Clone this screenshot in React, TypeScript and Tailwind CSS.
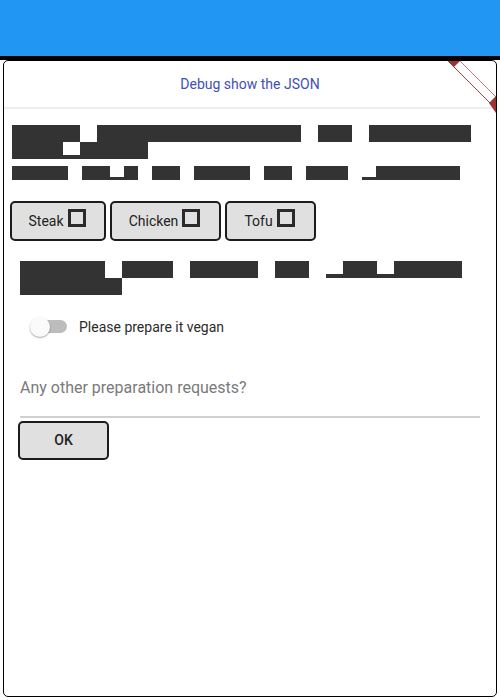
import React from "react";

const DARK = "bg-[#333333]";

// A redacted word
function Bar({ w, h }: { w: number; h: number }) {
  return <div className={DARK} style={{ width: w, height: h }} />;
}

// Redacted char with only its lower edge dark (white notch above)
function Notched({ w, h, dark }: { w: number; h: number; dark: number }) {
  return (
    <div className="flex flex-col" style={{ width: w, height: h }}>
      <div className="flex-1 bg-white" />
      <div className={DARK} style={{ height: dark }} />
    </div>
  );
}

function ChoiceButton({ label, width }: { label: string; width: number }) {
  return (
    <button
      className="flex h-[40px] items-center justify-center gap-[4px] rounded-[5px] border-2 border-[#1c1c1c] bg-[#e0e0e0] pr-[2px] text-[14px] text-[#222]"
      style={{ width }}
    >
      <span>{label}</span>
      <span className="mb-[6px] block size-[18px] border-[3px] border-[#2a2a2a] bg-[#e0e0e0]" />
    </button>
  );
}

function Switch() {
  return (
    <div className="relative h-[20px] w-[37px]">
      <div className="absolute left-[1px] top-[3px] h-[13px] w-[36px] rounded-full bg-[#bdbdbd]" />
      <div className="absolute left-0 top-0 size-[20px] rounded-full bg-[#fafafa] shadow-[0_1px_2px_rgba(0,0,0,0.35)]" />
    </div>
  );
}

export default function App() {
  return (
    <div className="h-[700px] w-[500px] bg-white font-['Roboto',sans-serif]">
      <div className="h-[56px] bg-[#2196f3]" />
      <div className="h-[4px] bg-black" />
      <div className="relative mx-[3px] h-[637px] overflow-hidden rounded-[5px] border border-black bg-white">
        {/* debug corner ribbon */}
        <svg
          className="absolute right-0 top-0"
          width="50"
          height="52"
          viewBox="0 0 50 52"
        >
          <line x1="2" y1="0" x2="52" y2="50" stroke="#b23a3a" strokeWidth="1" />
          <line x1="14" y1="0" x2="52" y2="38" stroke="#c05050" strokeWidth="0.8" />
          <polygon points="2,0 14,0 8,6" fill="#9e3232" />
          <polygon points="43,42 50,35 50,52" fill="#9e3232" />
        </svg>

        <div className="flex h-[46px] items-center justify-center text-[14px] text-[#3f51b5]">
          Debug show the JSON
        </div>
        <div className="h-[2px] bg-[#eeeeee]" />

        <div className="flex flex-col px-[8px]">
          {/* paragraph 1 */}
          <div className="mt-[16px] flex gap-[17px]">
            <Bar w={68} h={17} />
            <Bar w={204} h={17} />
            <Bar w={34} h={17} />
            <Bar w={102} h={17} />
          </div>
          <div className="flex">
            <Bar w={51} h={17} />
            <Notched w={17} h={17} dark={4} />
            <Bar w={68} h={17} />
          </div>

          {/* paragraph 2 */}
          <div className="mt-[7px] flex gap-[14px]">
            <Bar w={56} h={14} />
            <div className="flex">
              <Bar w={28} h={14} />
              <Notched w={14} h={14} dark={3} />
              <Bar w={14} h={14} />
            </div>
            <Bar w={28} h={14} />
            <Bar w={56} h={14} />
            <Bar w={28} h={14} />
            <Bar w={42} h={14} />
            <div className="flex">
              <Notched w={14} h={14} dark={3} />
              <Bar w={84} h={14} />
            </div>
          </div>

          {/* choices */}
          <div className="ml-[-2px] mt-[21px] flex gap-[4px]">
            <ChoiceButton label="Steak" width={96} />
            <ChoiceButton label="Chicken" width={111} />
            <ChoiceButton label="Tofu" width={91} />
          </div>

          <div className="ml-[8px] flex flex-col">
            {/* paragraph 3 */}
            <div className="mt-[20px] flex">
              <Bar w={85} h={17} />
              <div className="w-[17px]" />
              <Bar w={51} h={17} />
              <div className="w-[17px]" />
              <Bar w={68} h={17} />
              <div className="w-[17px]" />
              <Bar w={34} h={17} />
              <div className="w-[17px]" />
              <Notched w={17} h={17} dark={4} />
              <Bar w={34} h={17} />
              <Notched w={17} h={17} dark={4} />
              <Bar w={68} h={17} />
            </div>
            <Bar w={102} h={17} />

            {/* vegan switch */}
            <div className="mt-[12px] flex h-[40px] items-center gap-[12px] pl-[10px]">
              <Switch />
              <span className="text-[14px] text-[#2b2b2b]">Please prepare it vegan</span>
            </div>

            {/* text field */}
            <div className="mr-[8px] mt-[31px] flex flex-col">
              <div className="h-[20px] text-[16px] leading-[20px] text-[#7a7a7a]">
                Any other preparation requests?
              </div>
              <div className="mt-[18px] h-[2px] bg-[#d0d0d0]" />
            </div>
          </div>

          <button className="ml-[6px] mt-[3px] flex h-[39px] w-[91px] items-center justify-center rounded-[5px] border-2 border-[#1c1c1c] bg-[#e0e0e0] text-[14px] font-medium text-[#222]">
            OK
          </button>
        </div>
      </div>
    </div>
  );
}
